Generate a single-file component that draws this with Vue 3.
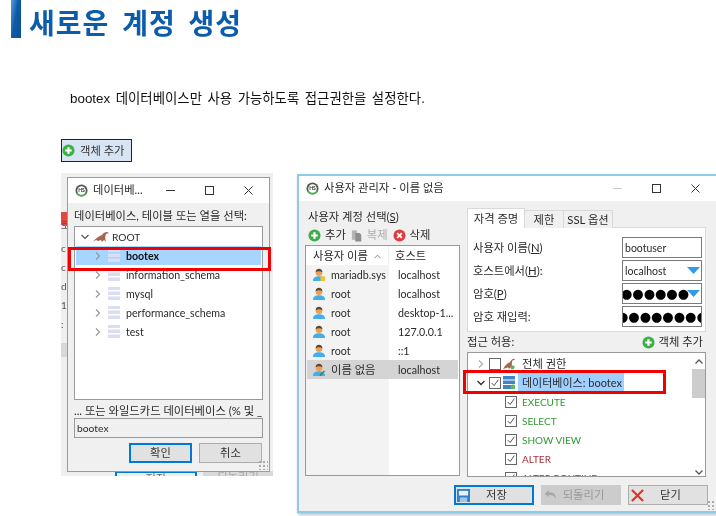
<script setup>
const dbs = [
  { name: 'bootex', sel: true },
  { name: 'information_schema' },
  { name: 'mysql' },
  { name: 'performance_schema' },
  { name: 'test' }
]
const users = [
  { name: 'mariadb.sys', host: 'localhost', badge: 'lock' },
  { name: 'root', host: 'localhost' },
  { name: 'root', host: 'desktop-1...' },
  { name: 'root', host: '127.0.0.1' },
  { name: 'root', host: '::1' },
  { name: '이름 없음', host: 'localhost', badge: 'pen', sel: true }
]
const fields = [
  { label: '사용자 이름', key: 'N', suffix: '', value: 'bootuser' },
  { label: '호스트에서', key: 'H', suffix: ':', value: 'localhost', drop: true },
  { label: '암호', key: 'P', suffix: '', value: '●●●●●●', drop: true, secret: true },
  { label: '암호 재입력:', key: '', suffix: '', value: '●●●●●●●●●', secret: true }
]
const privs = [
  { name: 'EXECUTE', cls: 'green' },
  { name: 'SELECT', cls: 'green' },
  { name: 'SHOW VIEW', cls: 'green' },
  { name: 'ALTER', cls: 'red' },
  { name: 'ALTER ROUTINE', cls: 'red' }
]
const sideBits = [
  { t: '로', y: 52 }, { t: 'c', y: 75 }, { t: 'c', y: 94 }, { t: 'd', y: 113 }, { t: '1.', y: 132 }, { t: ':', y: 151 }
]
</script>

<template>
  <div class="page">
    <header class="title">
      <span class="title-bar"></span>
      <h1>새로운 계정 생성</h1>
    </header>
    <p class="intro">bootex 데이터베이스만 사용 가능하도록 접근권한을 설정한다.</p>
    <div class="add-shot">
      <svg class="ico" viewBox="0 0 14 14"><circle cx="7" cy="7" r="6.5" fill="#3fae49"/><path d="M7 3.5v7M3.5 7h7" stroke="#fff" stroke-width="2.4"/></svg>
      <span>객체 추가</span>
    </div>

    <div class="shots">
      <section class="shot">
        <div class="behind-x"></div>
        <span class="behind-red"></span>
        <span v-for="b in sideBits" :key="b.y" class="behind-bit" :style="{ top: b.y + 'px' }">{{ b.t }}</span>
        <div class="behind-save">저장</div>
        <div class="behind-undo">되돌리기</div>

        <div class="dialog">
          <div class="titlebar">
            <svg class="hs" viewBox="0 0 14 14"><circle cx="7" cy="7" r="6.5" fill="#4b5a50"/><path d="M1 9.5A6.5 6.5 0 0 0 13 9.5Z" fill="#4caf50"/><circle cx="7" cy="7" r="4.6" fill="#fff"/><text x="7" y="9" text-anchor="middle" font-size="5.5" font-weight="700" fill="#333">HS</text></svg>
            <span class="t-text">데이터베...</span>
            <span class="wc wc-a"><svg viewBox="0 0 9 9"><path d="M0 4.500h9" stroke="#333"/></svg></span>
            <span class="wc wc-b"><svg viewBox="0 0 9 9"><rect x=".5" y=".5" width="8" height="8" fill="none" stroke="#333"/></svg></span>
            <span class="wc wc-c"><svg viewBox="0 0 9 9"><path d="M.5.5l8 8M8.500.5l-8 8" stroke="#333"/></svg></span>
          </div>
          <div class="d-body">
            <div class="lbl">데이터베이스, 테이블 또는 열을 선택:</div>
            <div class="d-tree">
              <div class="d-row root">
                <svg class="chev root-chev" viewBox="0 0 8 8"><path d="M.5 2l3.500 3.500L7.500 2" fill="none" stroke="#555" stroke-width="1.200"/></svg>
                <svg class="seal" viewBox="0 0 16 12"><path d="M0 11C3 7 6 5 9 4c1-2 3-3 5-3l2 1-3 1c-1 2-1 5 0 8l-2-2-2 2-1-2-3 1-2-1-3 2Z" fill="#a8654f"/></svg>
                <span>ROOT</span>
              </div>
              <div v-for="d in dbs" :key="d.name" class="d-row db" :class="{ sel: d.sel }">
                <svg class="chev" viewBox="0 0 8 8"><path d="M2 .5L5.500 4 2 7.500" fill="none" stroke="#999" stroke-width="1.200"/></svg>
                <svg class="dbi" viewBox="0 0 12 13"><path d="M0 0h12v3H0zM0 4.500h12v3.500H0zM0 9.500h12V13H0z" fill="#dcdcf2"/></svg>
                <span>{{ d.name }}</span>
              </div>
            </div>
            <div class="lbl wild">... 또는 와일드카드 데이터베이스 (% 및 _ 허용)</div>
            <div class="d-input">bootex</div>
            <div class="d-btns">
              <button class="btn primary">확인</button>
              <button class="btn">취소</button>
            </div>
          </div>
          <span class="grip"></span>
          <span class="redbox redbox-l"></span>
        </div>
      </section>

      <section class="win">
        <div class="titlebar">
          <svg class="hs" viewBox="0 0 14 14"><circle cx="7" cy="7" r="6.5" fill="#4b5a50"/><path d="M1 9.500A6.500 6.500 0 0 0 13 9.500Z" fill="#4caf50"/><circle cx="7" cy="7" r="4.600" fill="#fff"/><text x="7" y="9" text-anchor="middle" font-size="5.500" font-weight="700" fill="#333">HS</text></svg>
          <span class="t-text">사용자 관리자 - 이름 없음</span>
          <span class="wc wc-d"><svg viewBox="0 0 9 9"><path d="M0 4.500h9" stroke="#ccc"/></svg></span>
          <span class="wc wc-e"><svg viewBox="0 0 9 9"><rect x=".5" y=".5" width="8" height="8" fill="none" stroke="#333"/></svg></span>
          <span class="wc wc-f"><svg viewBox="0 0 9 9"><path d="M.5.5l8 8M8.500.5l-8 8" stroke="#333"/></svg></span>
        </div>

        <div class="w-body">
          <div class="w-left">
            <div class="lbl">사용자 계정 선택(<u>S</u>)</div>
            <div class="toolbar">
              <span class="tool">
                <svg class="ico" viewBox="0 0 14 14"><circle cx="7" cy="7" r="6.500" fill="#3fae49"/><path d="M7 3.500v7M3.500 7h7" stroke="#fff" stroke-width="2.400"/></svg>추가
              </span>
              <span class="tool off">
                <svg class="ico" viewBox="0 0 14 14"><path d="M1 1h6v11H1z" fill="#b4b4b4"/><path d="M5 4h5l2 2v8H5z" fill="#8e8e8e"/></svg>복제
              </span>
              <span class="tool">
                <svg class="ico" viewBox="0 0 14 14"><circle cx="7" cy="7" r="6.500" fill="#e23b3b"/><path d="M4.500 4.500l5 5M9.500 4.500l-5 5" stroke="#fff" stroke-width="2"/></svg>삭제
              </span>
            </div>
            <div class="list">
              <div class="list-head">
                <div class="c1">사용자 이름<svg class="sort" viewBox="0 0 8 5"><path d="M.5 4.500L4 1l3.500 3.500" fill="none" stroke="#777"/></svg></div>
                <div class="c2">호스트</div>
              </div>
              <div class="list-rows">
                <div v-for="(u, i) in users" :key="i" class="u-row" :class="{ sel: u.sel }">
                  <div class="c1">
                    <svg class="person" viewBox="0 0 13 14">
                      <path d="M0 14c0-4 3-5 6.500-5s6.500 1 6.500 5z" fill="#45ade8"/>
                      <circle cx="6.500" cy="5" r="3.600" fill="#e9a055"/>
                      <path d="M2.800 4.500C3 1.500 5 .8 6.500.8s3.500.7 3.700 3.700C8 3 5 3 2.800 4.500Z" fill="#5c4630"/>
                      <path v-if="u.badge === 'lock'" d="M8 9h5v5H8z" fill="#f1c232"/>
                      <path v-if="u.badge === 'pen'" d="M7 13l5-5 1 1-5 5z" fill="#3d7a3d"/>
                    </svg>
                    <span>{{ u.name }}</span>
                  </div>
                  <div class="c2">{{ u.host }}</div>
                </div>
              </div>
            </div>
          </div>

          <div class="w-right">
            <div class="tabs">
              <span class="tab active">자격 증명</span>
              <span class="tab t2">제한</span>
              <span class="tab t3">SSL 옵션</span>
            </div>
            <div class="pane">
              <div v-for="f in fields" :key="f.label" class="field">
                <span>{{ f.label }}<template v-if="f.key">(<u>{{ f.key }}</u>)</template>{{ f.suffix }}</span>
                <div class="input" :class="{ secret: f.secret }">
                  <span class="val">{{ f.value }}</span>
                  <svg v-if="f.drop" class="drop" viewBox="0 0 13 7"><path d="M0 0h13L6.500 7z" fill="#2f9bea"/></svg>
                </div>
              </div>
            </div>
            <div class="access-head">
              <span>접근 허용:</span>
              <span class="tool">
                <svg class="ico" viewBox="0 0 14 14"><circle cx="7" cy="7" r="6.500" fill="#3fae49"/><path d="M7 3.500v7M3.500 7h7" stroke="#fff" stroke-width="2.400"/></svg>객체 추가
              </span>
            </div>
            <div class="p-tree">
              <div class="p-rows">
                <div class="p-row">
                  <svg class="chev" viewBox="0 0 8 8"><path d="M2 .5L5.500 4 2 7.500" fill="none" stroke="#aaa" stroke-width="1.200"/></svg>
                  <span class="cb"></span>
                  <svg class="seal2" viewBox="0 0 14 13"><path d="M0 13C3 8 5 6 8 5c1-2 3-4 5-4l1 1-3 1c-1 3-1 6 0 10l-2-2-2 2-1-2-3 1z" fill="#a8654f"/><circle cx="11" cy="11" r="2.500" fill="#5cb85c"/></svg>
                  <span class="p-t">전체 권한</span>
                </div>
                <div class="p-row">
                  <svg class="chev" viewBox="0 0 8 8"><path d="M.5 2l3.500 3.500L7.500 2" fill="none" stroke="#333" stroke-width="1.400"/></svg>
                  <span class="cb on"><svg viewBox="0 0 12 12"><path d="M2 6l3 3 5-7" fill="none" stroke="#444" stroke-width="1.100"/></svg></span>
                  <svg class="stack" viewBox="0 0 12 13"><path d="M0 0h12v3.500H0zM0 4.500h12V8H0zM0 9h12v4H0z" fill="#3f83c9"/><circle cx="10" cy="11" r="2.500" fill="#5cb85c"/></svg>
                  <span class="p-t hl">데이터베이스: bootex</span>
                </div>
                <div v-for="p in privs" :key="p.name" class="p-row child" :class="p.cls">
                  <span class="cb on"><svg viewBox="0 0 12 12"><path d="M2 6l3 3 5-7" fill="none" stroke="#444" stroke-width="1.100"/></svg></span>
                  <span class="p-name">{{ p.name }}</span>
                </div>
              </div>
              <div class="scroll">
                <svg class="arr" viewBox="0 0 8 5"><path d="M.5 4.500L4 1l3.500 3.500" fill="none" stroke="#555" stroke-width="1.300"/></svg>
                <span class="thumb"></span>
                <svg class="arr" viewBox="0 0 8 5"><path d="M.5.5L4 4 7.500.5" fill="none" stroke="#555" stroke-width="1.300"/></svg>
              </div>
            </div>
          </div>
        </div>

        <div class="w-foot">
          <button class="fbtn primary">
            <svg class="ico" viewBox="0 0 14 14"><path d="M0 0h14v14H0z" fill="#2f7fc9"/><path d="M2 2h10v5H2z" fill="#e8f2fb"/><path d="M3 9h8v5H3z" fill="#9cc6ea"/></svg>
            <span>저장</span>
          </button>
          <button class="fbtn off">
            <svg class="ico" viewBox="0 0 14 14"><path d="M1 5l4-4v2.500c5 0 8 2 8 7-1.500-3-4-4-8-4V9z" fill="#a8a8a8"/></svg>
            <span>되돌리기</span>
          </button>
          <button class="fbtn">
            <svg class="ico" viewBox="0 0 14 14"><path d="M1 1l12 12M13 1L1 13" stroke="#e0352b" stroke-width="2.400"/></svg>
            <span>닫기</span>
          </button>
        </div>
        <span class="grip"></span>
        <span class="redbox redbox-r"></span>
      </section>
    </div>
  </div>
</template>

<style>
html, body { margin: 0; background: #fff; }
</style>

<style scoped>
.page {
  position: relative;
  width: 716px;
  height: 516px;
  overflow: hidden;
  background: #fff;
  color: #2a2a2a;
  font-family: Lato, "Noto Sans CJK KR", sans-serif;
  font-size: 11.300px;
  line-height: 16px;
  filter: blur(.3px);
}
.title { display: flex; height: 38px; padding-left: 11px; }
.title-bar { width: 10px; height: 38px; background: linear-gradient(100deg, #5f9fd8 0, #0d5ca8 45%, #0a4f96 100%); }
.title h1 {
  margin: 0 0 0 8px;
  font-size: 28px;
  line-height: 44px;
  font-weight: 700;
  letter-spacing: 1px;
  word-spacing: 5.500px;
  color: #0b5cab;
  font-family: "Noto Sans CJK KR", sans-serif;
  white-space: nowrap;
}
.intro {
  margin: 51px 0 0 70px; font-size: 13.400px; line-height: 20px; color: #111; word-spacing: 1.800px;
  font-family: "Liberation Sans", "Noto Sans CJK KR", sans-serif;
}
.add-shot {
  display: flex; align-items: center; gap: 5px;
  width: 71px; height: 23px; box-sizing: border-box; margin: 30px 0 0 61px;
  border: 1px solid #222; background: #d6e4f4;
  color: #333;
}
.ico { width: 13px; height: 13px; flex: none; }
.shots { display: flex; align-items: flex-start; margin: 11px 0 0 61px; }

.shot {
  position: relative; width: 212px; height: 303px; box-sizing: border-box; flex: none;
  padding: 4px 0 0 6px; background: #efefef; overflow: hidden;
}
.behind-bit { position: absolute; left: 0; font-size: 10px; line-height: 14px; color: #555; margin-top: -7px; }
.behind-red { position: absolute; left: 0; top: 39px; width: 6px; height: 13px; background: #e04a3f; }
.behind-x { position: absolute; left: 0; top: 170px; width: 6px; height: 14px; background: #d8d8d8; }
.behind-save { position: absolute; left: 54px; top: 298px; width: 78px; height: 18px; border: 2px solid #0078d7; background: #eee; text-align: center; line-height: 12px; color: #666; }
.behind-undo { position: absolute; left: 142px; top: 298px; width: 70px; height: 18px; background: #d9d9d9; text-align: center; line-height: 12px; color: #aaa; }

.dialog {
  position: relative; width: 203px; height: 295px; box-sizing: border-box;
  border: 1px solid #5aaee0; background: #f0f0f0;
}
.titlebar { position: relative; display: flex; align-items: center; height: 25px; box-sizing: border-box; padding: 0 0 1px 7px; background: #fff; }
.hs { width: 13px; height: 13px; flex: none; }
.t-text { margin-left: 5px; white-space: nowrap; }
.wc { position: absolute; top: 8px; width: 9px; height: 9px; }
.wc svg { display: block; width: 9px; height: 9px; }
.wc-a { left: 98px; }
.wc-b { left: 137px; }
.wc-c { left: 176px; }
.wc-d { left: 314px; }
.wc-e { left: 353px; }
.wc-f { left: 392px; }

.d-body { padding: 5px 6px 0; }
.lbl { line-height: 16px; white-space: nowrap; overflow: hidden; }
.d-tree { height: 174px; box-sizing: border-box; margin-top: 2px; padding: 0 1px; border: 1px solid #999; background: #fff; }
.d-row { display: flex; align-items: center; height: 19px; padding-left: 5px; box-sizing: border-box; white-space: nowrap; font-size: 10.600px; }
.d-row.root { font-size: 10.200px; }
.d-row.db { padding-left: 18px; }
.d-row.sel { background: #a6d5ff; font-weight: 700; color: #111; }
.chev { width: 8px; height: 8px; flex: none; }
.root-chev { margin-right: 4px; }
.seal { width: 16px; height: 12px; margin-right: 3px; }
.dbi { width: 12px; height: 13px; margin: 0 6px; }
.wild { margin-top: 3px; line-height: 15px; }
.d-input { height: 20px; box-sizing: border-box; border: 1px solid #999; padding-left: 2px; line-height: 18px; background: #f0f0f0; font-size: 10.300px; }
.d-btns { display: flex; justify-content: flex-end; gap: 7px; margin-top: 5px; padding-right: 1px; }
.btn {
  width: 63px; height: 20px; padding: 0; box-sizing: border-box; border: 1px solid #adadad;
  background: #e1e1e1; color: #333; font: inherit;
}
.btn.primary { border: 2px solid #0078d7; }
.grip {
  position: absolute; right: 1px; bottom: 1px; width: 10px; height: 10px;
  background-image: radial-gradient(circle, #aaa 1px, transparent 1.200px);
  background-size: 4px 4px;
}
.redbox { position: absolute; border: 3px solid #f00000; box-sizing: border-box; pointer-events: none; }
.redbox-l { left: 0; top: 69px; width: 203px; height: 24px; }

.win {
  position: relative; width: 421px; height: 339px; box-sizing: border-box; flex: none;
  margin: 1px 0 0 24px; border: 2px solid #8fcbe8; border-right: 0; background: #f0f0f0;
  box-shadow: 1px 2px 3px rgba(0, 0, 0, .25);
}
.w-body { display: flex; }
.w-left { width: 155px; margin-left: 6px; padding-top: 8px; }
.w-left .lbl { padding-left: 3px; }
.toolbar { display: flex; height: 18px; align-items: center; gap: 5px; padding-left: 3px; margin-top: 1px; }
.tool { display: inline-flex; align-items: center; gap: 4px; white-space: nowrap; }
.tool.off { color: #aaa; }
.tool.off .ico { width: 12px; }
.list { height: 231px; box-sizing: border-box; margin-top: 1px; border: 1px solid #999; background: #fff; display: flex; flex-direction: column; }
.list-head { display: flex; height: 19px; line-height: 19px; flex: none; background: #fff; }
.list-head .c1 { width: 83px; padding-left: 7px; box-sizing: border-box; border-right: 1px solid #eee; position: relative; }
.list-head .c2 { padding-left: 6px; }
.sort { position: absolute; right: 7px; top: 8px; width: 7px; height: 5px; }
.list-rows { flex: 1; background: linear-gradient(90deg, #f3f3f3 83px, #fff 83px); }
.u-row { display: flex; height: 19px; align-items: center; font-size: 10.700px; }
.u-row .c1 { display: flex; align-items: center; width: 83px; padding-left: 7px; box-sizing: border-box; white-space: nowrap; overflow: hidden; }
.u-row .c2 { padding-left: 9px; white-space: nowrap; }
.u-row.sel { background: #d4d4d4; margin: 0 1px; }
.u-row.sel .c1 { padding-left: 6px; width: 82px; font-size: 11.300px; }
.person { width: 12px; height: 13px; flex: none; margin-right: 6px; }

.w-right { width: 239px; margin-left: 7px; padding-top: 7px; }
.tabs { display: flex; align-items: flex-end; height: 20px; position: relative; z-index: 1; }
.tab { box-sizing: border-box; height: 18px; line-height: 18px; text-align: center; background: #f0f0f0; border: 1px solid #d9d9d9; border-bottom: 0; margin-left: -1px; white-space: nowrap; }
.tab.active { width: 58px; height: 20px; line-height: 20px; margin-left: 0; background: #fff; }
.t2 { width: 40px; }
.t3 { width: 50px; }
.pane { height: 105px; box-sizing: border-box; margin-top: -1px; padding: 9px 3px 0 5px; border: 1px solid #d9d9d9; background: #fff; display: flex; flex-direction: column; gap: 2px; }
.field { display: flex; justify-content: space-between; align-items: center; height: 21px; }
.input { position: relative; display: flex; align-items: center; width: 80px; height: 21px; box-sizing: border-box; border: 1px solid #7a7a7a; padding-left: 2px; overflow: hidden; background: #fff; font-size: 10.500px; }
.input .val { white-space: nowrap; }
.input.secret .val { font-size: 13px; color: #000; margin-left: -4px; font-family: "DejaVu Sans", sans-serif; }
.field:nth-child(4) .input.secret .val { margin-left: -8px; }
.drop { position: absolute; right: 1px; top: 6px; width: 13px; height: 7px; }
.access-head { display: flex; justify-content: space-between; align-items: center; height: 16px; margin: 2px 0; }
.access-head .tool { margin-right: 3px; }
.p-tree { display: flex; height: 125px; box-sizing: border-box; border: 1px solid #999; background: #fff; overflow: hidden; }
.p-rows { flex: 1; padding-top: 1px; overflow: hidden; }
.p-row { display: flex; align-items: center; height: 19px; padding-left: 9px; white-space: nowrap; }
.cb { display: block; width: 12px; height: 12px; box-sizing: border-box; border: 1px solid #666; background: #fff; margin-left: 4px; flex: none; }
.cb svg { display: block; width: 10px; height: 10px; }
.seal2 { width: 12px; height: 13px; margin-left: 2px; flex: none; }
.stack { width: 12px; height: 13px; margin-left: 2px; flex: none; }
.p-t { margin-left: 7px; }
.p-t.hl { margin-left: 3px; padding: 0 4px; width: 106px; box-sizing: border-box; height: 19px; line-height: 19px; background: #9fd0ff; font-size: 11px; }
.child { padding-left: 37px; }
.child .cb { margin: 0 5px 0 0; }
.p-name { font-size: 10px; }
.green .p-name { color: #2f9a2f; }
.red .p-name { color: #a8323a; }
.scroll { width: 13px; flex: none; background: #fff; display: flex; flex-direction: column; align-items: center; }
.arr { width: 8px; height: 5px; margin: 6px 0 5px; flex: none; }
.thumb { display: block; width: 100%; height: 29px; background: #cdcdcd; margin-bottom: 66px; flex: none; }

.w-foot { display: flex; justify-content: flex-end; gap: 7px; margin-top: 8px; padding-right: 10px; }
.fbtn {
  display: flex; align-items: center; width: 80px; height: 20px; box-sizing: border-box; padding: 0 2px;
  border: 1px solid #adadad; background: #e1e1e1; font: inherit; color: #333;
}
.fbtn span { flex: 1; text-align: center; padding-right: 8px; }
.fbtn.primary { border: 2px solid #0078d7; padding: 0 1px; }
.fbtn.off { background: #ccc; border-color: #ccc; color: #999; }
.redbox-r { left: 164px; top: 194px; width: 203px; height: 24px; }
</style>
